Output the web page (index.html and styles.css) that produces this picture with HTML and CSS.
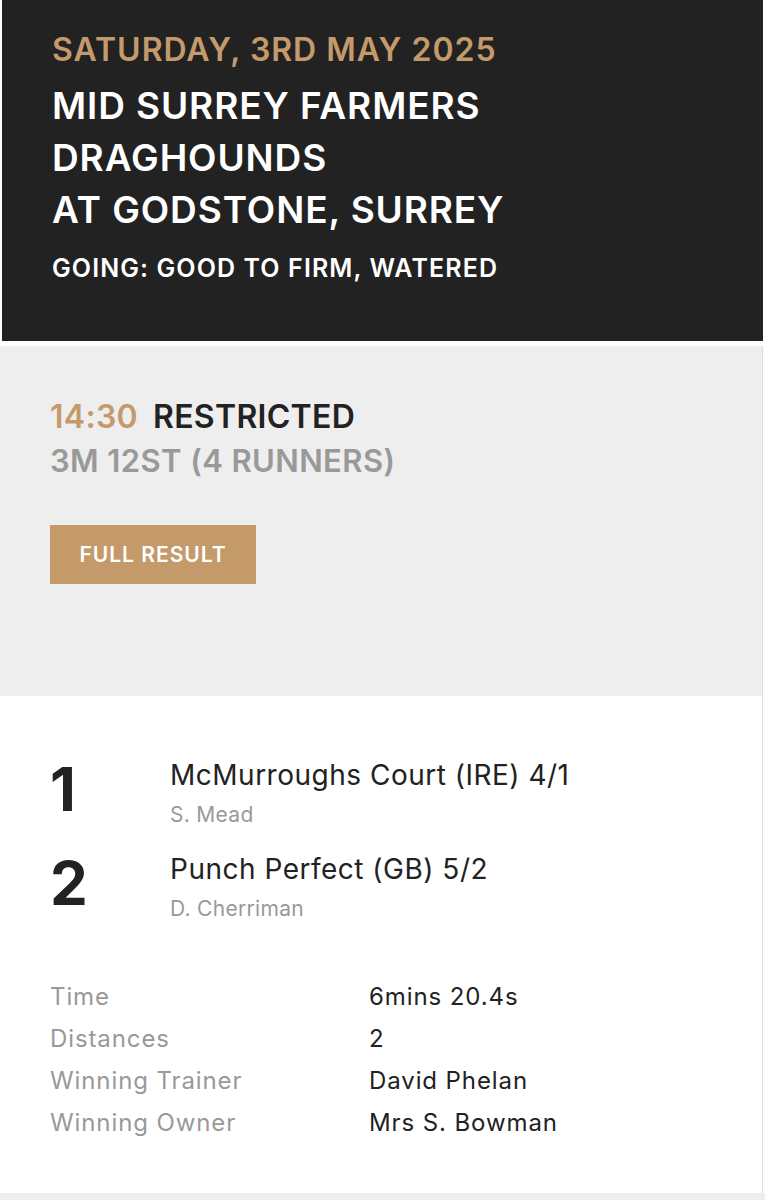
FILE: index.html
```html
<!DOCTYPE html>
<html>
<head>
<meta charset="utf-8">
<link rel="stylesheet" href="styles.css">
</head>
<body>
<div class="page">
  <header class="meeting">
    <div class="date">SATURDAY, 3RD MAY 2025</div>
    <h1 class="title">MID SURREY FARMERS<br>DRAGHOUNDS<br>AT GODSTONE, SURREY</h1>
    <div class="going">GOING: GOOD TO FIRM, WATERED</div>
  </header>
  <section class="race">
    <div class="race-head"><span class="time">14:30</span><span class="race-name">RESTRICTED</span></div>
    <div class="race-sub">3M 12ST (4 RUNNERS)</div>
    <a class="btn">FULL RESULT</a>
  </section>
  <section class="result">
    <div class="runner">
      <div class="pos">1</div>
      <div class="runner-info">
        <div class="horse">McMurroughs Court (IRE) 4/1</div>
        <div class="jockey">S. Mead</div>
      </div>
    </div>
    <div class="runner">
      <div class="pos">2</div>
      <div class="runner-info">
        <div class="horse">Punch Perfect (GB) 5/2</div>
        <div class="jockey">D. Cherriman</div>
      </div>
    </div>
    <dl class="details">
      <dt>Time</dt><dd>6mins 20.4s</dd>
      <dt>Distances</dt><dd>2</dd>
      <dt>Winning Trainer</dt><dd>David Phelan</dd>
      <dt>Winning Owner</dt><dd>Mrs S. Bowman</dd>
    </dl>
  </section>
  <div class="footer-strip"></div>
</div>
</body>
</html>
```
FILE: styles.css
```css
* { box-sizing: border-box; }
html, body { margin: 0; padding: 0; background: #fff; }
body { font-family: "Inter", "Liberation Sans", sans-serif; color: #222; }
.page { width: 765px; }

.meeting {
  margin: 0 2px;
  height: 341px;
  background: #222222;
  padding: 30px 50px 0 50px;
}
.date {
  color: #c49a6c;
  font-weight: 600;
  font-size: 32px;
  line-height: 40px;
  letter-spacing: 1px;
}
.title {
  margin: 10px 0 0;
  color: #fff;
  font-weight: 600;
  font-size: 37px;
  line-height: 52px;
  letter-spacing: 0.9px;
}
.going {
  margin-top: 16px;
  color: #fff;
  font-weight: 600;
  font-size: 25px;
  line-height: 32px;
  letter-spacing: 1.1px;
}

.race {
  margin-top: 5px;
  width: 763px;
  height: 350px;
  background: #eeeeee;
  border-right: 1px solid #dddddd;
  padding: 51px 0 0 50px;
}
.race-head {
  font-weight: 600;
  font-size: 32px;
  line-height: 40px;
  letter-spacing: 0.3px;
}
.time { color: #c49a6c; margin-right: 15px; }
.race-name { color: #222; }
.race-sub {
  margin-top: 4px;
  color: #999;
  font-weight: 600;
  font-size: 31px;
  line-height: 40px;
  letter-spacing: 0.4px;
}
.btn {
  display: inline-flex;
  align-items: center;
  justify-content: center;
  margin-top: 44px;
  width: 206px;
  height: 59px;
  background: #c49a6a;
  color: #fff;
  font-weight: 600;
  font-size: 21px;
  letter-spacing: 1px;
}

.result {
  width: 763px;
  height: 497px;
  border-right: 1px solid #dddddd;
  padding: 59px 0 0 50px;
}
.runner {
  display: flex;
  margin-bottom: 18px;
}
.pos {
  width: 120px;
  font-weight: 700;
  font-size: 60px;
  line-height: 64px;
  padding-top: 2px;
}
.horse {
  font-size: 28px;
  line-height: 40px;
  letter-spacing: 0.5px;
  color: #222;
}
.jockey {
  margin-top: 4px;
  font-size: 21px;
  line-height: 32px;
  letter-spacing: 0.3px;
  color: #999;
}
.details {
  display: grid;
  grid-template-columns: 319px auto;
  margin: 51px 0 0;
  font-size: 24px;
  line-height: 42px;
  letter-spacing: 0.9px;
}
.details dt { color: #999; }
.details dd { margin: 0; color: #222; }

.footer-strip {
  height: 20px;
  background: #eeeeee;
}
```
